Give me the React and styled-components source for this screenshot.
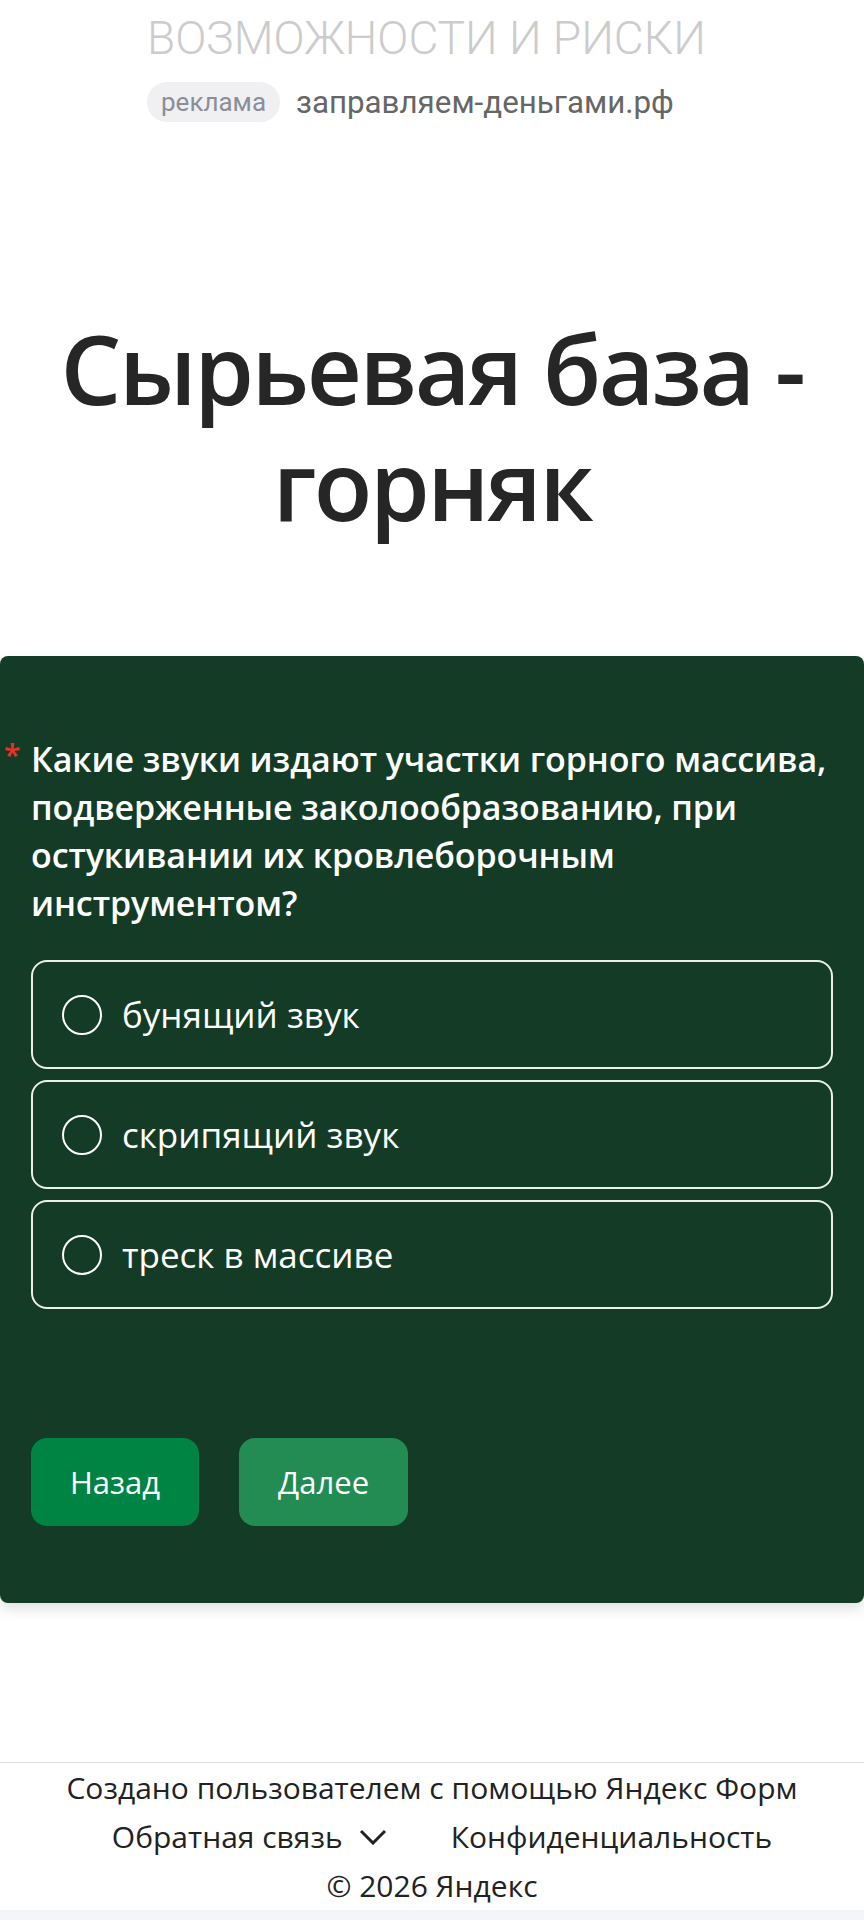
import React from "react";
import styled, { createGlobalStyle } from "styled-components";

const GlobalStyle = createGlobalStyle`
  html, body {
    margin: 0;
    padding: 0;
    background: #ffffff;
  }
  body {
    font-family: "Open Sans", "Noto Sans", sans-serif;
    color: #262626;
  }
`;

const Page = styled.div`
  width: 864px;
  display: flex;
  flex-direction: column;
`;

const AdBlock = styled.div`
  padding: 10px 0 0 147px;
  display: flex;
  flex-direction: column;
  gap: 16px;
`;

const AdTitle = styled.div`
  font-family: Roboto, "Liberation Sans", sans-serif;
  font-weight: 300;
  font-size: 46px;
  line-height: 56px;
  color: #cccccc;
  white-space: nowrap;
`;

const AdRow = styled.div`
  display: flex;
  align-items: center;
  gap: 16px;
`;

const AdBadge = styled.span`
  display: flex;
  align-items: center;
  height: 40px;
  padding: 0 14px;
  border-radius: 20px;
  background: #f0f0f3;
  color: #8b8e97;
  font-family: Roboto, "Liberation Sans", sans-serif;
  font-size: 26px;
`;

const AdLink = styled.span`
  font-family: Roboto, "Liberation Sans", sans-serif;
  font-size: 31.3px;
  color: #666666;
`;

const Heading = styled.h1`
  margin: 188px 0 0;
  display: flex;
  flex-direction: column;
  align-items: center;
  font-size: 96px;
  font-weight: 600;
  letter-spacing: -2.5px;
  line-height: 116px;
  color: #262626;
`;

const Card = styled.section`
  margin-top: 114px;
  background: #143b25;
  border-radius: 8px;
  padding: 79px 31px 77px;
  box-shadow: 0 6px 14px rgba(0, 0, 0, 0.12);
  display: flex;
  flex-direction: column;
`;

const Question = styled.div`
  display: grid;
  grid-template-columns: 0 1fr;
  margin-right: -26px;
  font-size: 34px;
  font-weight: 600;
  letter-spacing: -0.1px;
  line-height: 48px;
  color: #ffffff;
`;

const Required = styled.span`
  color: #e8322a;
  margin-left: -27px;
  font-size: 30px;
  line-height: 40px;
`;

const Options = styled.div`
  margin-top: 33px;
  display: flex;
  flex-direction: column;
  gap: 11px;
`;

const Option = styled.label`
  height: 109px;
  box-sizing: border-box;
  border: 2px solid #e9efe9;
  border-radius: 16px;
  display: flex;
  align-items: center;
  gap: 20px;
  padding-left: 29px;
  color: #ffffff;
  font-size: 35px;
`;

const Radio = styled.span`
  width: 40px;
  height: 40px;
  box-sizing: border-box;
  border: 2px solid #ffffff;
  border-radius: 50%;
  flex-shrink: 0;
`;

const Buttons = styled.div`
  margin-top: 129px;
  display: flex;
  gap: 40px;
`;

const Button = styled.button`
  height: 88px;
  padding: 0 39px;
  border: none;
  border-radius: 16px;
  background: ${(p) => p.$bg};
  color: #ffffff;
  font-family: "Open Sans", "Noto Sans", sans-serif;
  font-size: 31px;
`;

const Footer = styled.footer`
  margin-top: 159px;
  border-top: 1px solid #dedede;
  display: flex;
  flex-direction: column;
  align-items: center;
  font-size: 30px;
  line-height: 49px;
  color: #222222;
`;

const FooterRow = styled.div`
  display: flex;
  align-items: center;
  gap: 64px;
  padding-left: 20px;
`;

const Feedback = styled.span`
  display: flex;
  align-items: center;
  gap: 16px;
`;

const BottomStrip = styled.div`
  height: 30px;
  background: #f4f5fa;
`;

const options = ["бунящий звук", "скрипящий звук", "треск в массиве"];

export default function App() {
  return (
    <Page>
      <GlobalStyle />
      <AdBlock>
        <AdTitle>ВОЗМОЖНОСТИ И РИСКИ</AdTitle>
        <AdRow>
          <AdBadge>реклама</AdBadge>
          <AdLink>заправляем-деньгами.рф</AdLink>
        </AdRow>
      </AdBlock>

      <Heading>
        <span>Сырьевая база -</span>
        <span>горняк</span>
      </Heading>

      <Card>
        <Question>
          <Required>*</Required>
          <span>
            Какие звуки издают участки горного массива, подверженные
            заколообразованию, при остукивании их кровлеборочным инструментом?
          </span>
        </Question>
        <Options>
          {options.map((o) => (
            <Option key={o}>
              <Radio />
              {o}
            </Option>
          ))}
        </Options>
        <Buttons>
          <Button $bg="#008443">Назад</Button>
          <Button $bg="#228c53">Далее</Button>
        </Buttons>
      </Card>

      <Footer>
        <div>Создано пользователем с помощью Яндекс Форм</div>
        <FooterRow>
          <Feedback>
            Обратная связь
            <svg width="28" height="16" viewBox="0 0 28 16" fill="none">
              <path d="M2 2l12 12L26 2" stroke="#222" strokeWidth="3" />
            </svg>
          </Feedback>
          <span>Конфиденциальность</span>
        </FooterRow>
        <div>© 2026 Яндекс</div>
      </Footer>
      <BottomStrip />
    </Page>
  );
}
